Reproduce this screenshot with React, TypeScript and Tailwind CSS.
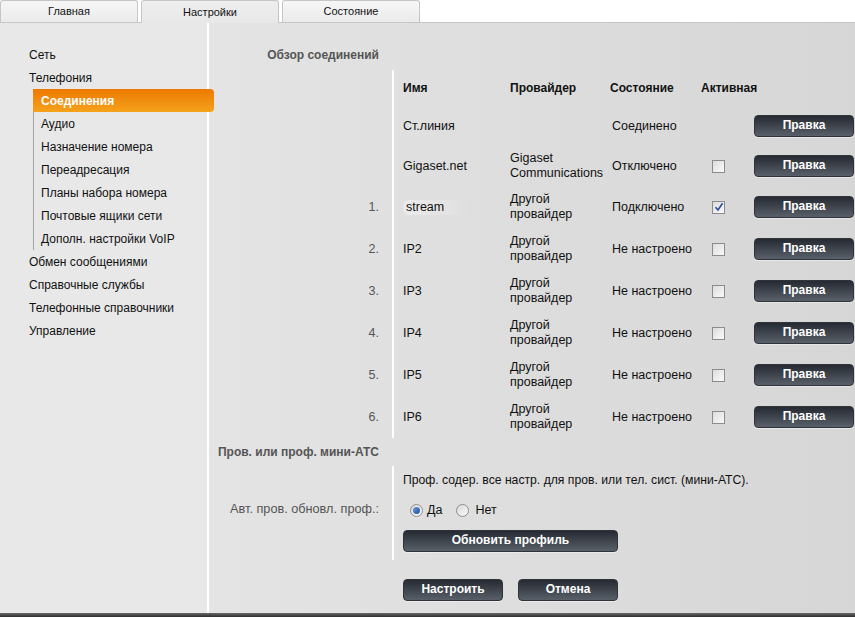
import React from "react";

const sidebarTop = ["Сеть", "Телефония"];
const subItems = [
  "Соединения",
  "Аудио",
  "Назначение номера",
  "Переадресация",
  "Планы набора номера",
  "Почтовые ящики сети",
  "Дополн. настройки VoIP",
];
const sidebarBottom = [
  "Обмен сообщениями",
  "Справочные службы",
  "Телефонные справочники",
  "Управление",
];

type Conn = {
  num: string;
  name: string;
  provider: string[];
  state: string;
  check: "none" | "off" | "on";
  h: string;
  stream?: boolean;
};

const rows: Conn[] = [
  { num: "", name: "Ст.линия", provider: [], state: "Соединено", check: "none", h: "h-[40px]" },
  { num: "", name: "Gigaset.net", provider: ["Gigaset", "Communications"], state: "Отключено", check: "off", h: "h-[40px]" },
  { num: "1.", name: "stream", provider: ["Другой", "провайдер"], state: "Подключено", check: "on", h: "h-[42px]", stream: true },
  { num: "2.", name: "IP2", provider: ["Другой", "провайдер"], state: "Не настроено", check: "off", h: "h-[42px]" },
  { num: "3.", name: "IP3", provider: ["Другой", "провайдер"], state: "Не настроено", check: "off", h: "h-[42px]" },
  { num: "4.", name: "IP4", provider: ["Другой", "провайдер"], state: "Не настроено", check: "off", h: "h-[42px]" },
  { num: "5.", name: "IP5", provider: ["Другой", "провайдер"], state: "Не настроено", check: "off", h: "h-[42px]" },
  { num: "6.", name: "IP6", provider: ["Другой", "провайдер"], state: "Не настроено", check: "off", h: "h-[42px]" },
];

function Btn({ label, w }: { label: string; w: string }) {
  return (
    <div
      className={`${w} h-[22px] rounded-[4px] bg-gradient-to-b from-[#262b33] to-[#5a6069] border border-[#30343a] flex items-start justify-center pt-[2px] text-white font-bold text-[12px] leading-[15px] shadow-[0_1px_0_rgba(255,255,255,0.4)]`}
    >
      {label}
    </div>
  );
}

function Checkbox({ checked }: { checked: boolean }) {
  return (
    <div className="w-[13px] h-[13px] border border-[#8c8c8c] bg-gradient-to-br from-[#dcdcdc] to-[#fbfbfb] flex items-center justify-center">
      {checked && (
        <svg width="10" height="10" viewBox="0 0 10 10">
          <path d="M1.5 5.2 L4 8 L8.6 1.2" fill="none" stroke="#2a4a9a" strokeWidth="1.6" />
        </svg>
      )}
    </div>
  );
}

function Radio({ checked }: { checked: boolean }) {
  return (
    <div className="w-[13px] h-[13px] rounded-full border border-[#8e8e8e] bg-gradient-to-br from-[#d8d8d8] to-[#fafafa] flex items-center justify-center">
      {checked && <div className="w-[7px] h-[7px] rounded-full bg-gradient-to-br from-[#6a9be0] to-[#1d4f9e]" />}
    </div>
  );
}

export default function App() {
  return (
    <div
      className="w-[855px] h-[617px] bg-white overflow-hidden text-[#111]"
      style={{ fontFamily: '"Liberation Sans", Arial, sans-serif' }}
    >
      {/* Tabs */}
      <div className="h-[23px] flex items-end gap-[3px] border-b border-[#c6c6c6]">
        <div className="w-[138px] h-[22px] rounded-t-[3px] border border-b-0 border-[#c6c6c6] bg-gradient-to-b from-[#f6f6f6] to-[#ebebeb] flex items-center justify-center text-[11px]">
          Главная
        </div>
        <div className="w-[138px] h-[23px] -mb-px rounded-t-[3px] border border-b-0 border-[#c6c6c6] bg-gradient-to-b from-[#eeeeee] to-[#e8e8e8] flex items-center justify-center text-[11px] relative z-10">
          Настройки
        </div>
        <div className="w-[138px] h-[22px] rounded-t-[3px] border border-b-0 border-[#c6c6c6] bg-gradient-to-b from-[#f6f6f6] to-[#ebebeb] flex items-center justify-center text-[11px]">
          Состояние
        </div>
      </div>

      {/* Body */}
      <div className="flex h-[590px]">
        {/* Sidebar */}
        <div className="w-[209px] shrink-0 bg-[#e8e8e8] border-r-2 border-white pt-[20px] text-[12px]">
          {sidebarTop.map((t) => (
            <div key={t} className="h-[23px] flex items-center pl-[29px]">
              {t}
            </div>
          ))}
          <div className="ml-[33px] border-l border-[#a2a2a2]">
            {subItems.map((t, i) =>
              i === 0 ? (
                <div
                  key={t}
                  className="relative z-10 -ml-px w-[181px] h-[23px] flex items-center pl-[8px] rounded-r-[4px] bg-gradient-to-b from-[#ec7800] to-[#f5a21a] text-white font-bold"
                >
                  {t}
                </div>
              ) : (
                <div key={t} className="h-[23px] flex items-center pl-[7px]">
                  {t}
                </div>
              )
            )}
          </div>
          {sidebarBottom.map((t) => (
            <div key={t} className="h-[23px] flex items-center pl-[29px]">
              {t}
            </div>
          ))}
        </div>

        {/* Main */}
        <div className="flex-1 bg-gradient-to-r from-[#e4e4e4] to-[#d6d6d6] pt-[21px] text-[12.5px]">
          {/* Title 1 */}
          <div className="flex h-[22px] items-center">
            <div className="w-[183px] text-right pr-[13px] font-bold text-[12px] text-[#555]">Обзор соединений</div>
          </div>
          <div className="h-[4px]" />

          {/* Header */}
          <div className="flex h-[36px]">
            <div className="w-[185px] shrink-0 border-r-2 border-white" />
            <div className="flex items-center pl-[9px] font-bold text-[12px]">
              <div className="w-[107px]">Имя</div>
              <div className="w-[100px]">Провайдер</div>
              <div className="w-[91px]">Состояние</div>
              <div className="w-[53px]">Активная</div>
            </div>
          </div>

          {rows.map((r) => (
            <div key={r.name} className={`flex ${r.h}`}>
              <div className="w-[185px] shrink-0 border-r-2 border-white flex items-center justify-end pr-[13px] text-[#555]">
                {r.num}
              </div>
              <div className="flex items-center pl-[9px] leading-[15px]">
                <div className="w-[107px]">
                  {r.stream ? (
                    <span className="inline-block pl-[3px] pr-[26px] rounded-[6px] bg-gradient-to-r from-[#ebebeb] via-[#e5e5e5] to-transparent">
                      {r.name}
                    </span>
                  ) : (
                    r.name
                  )}
                </div>
                <div className="w-[100px]">
                  {r.provider.map((p) => (
                    <div key={p}>{p}</div>
                  ))}
                </div>
                <div className="w-[92px] pl-[2px]">{r.state}</div>
                <div className="w-[52px] pl-[10px]">
                  {r.check !== "none" && <Checkbox checked={r.check === "on"} />}
                </div>
                <Btn label="Правка" w="w-[100px]" />
              </div>
            </div>
          ))}

          {/* Title 2 */}
          <div className="flex h-[28px] items-center">
            <div className="w-[183px] text-right pr-[13px] font-bold text-[12px] text-[#555]">
              Пров. или проф. мини-АТС
            </div>
          </div>

          <div className="flex h-[28px]">
            <div className="w-[185px] shrink-0 border-r-2 border-white" />
            <div className="flex items-center pl-[9px] text-[12.2px]">
              Проф. содер. все настр. для пров. или тел. сист. (мини-АТС).
            </div>
          </div>
          <div className="flex h-[32px]">
            <div className="w-[185px] shrink-0 border-r-2 border-white flex items-center justify-end pr-[13px] text-[#555] text-[12.7px]">
              Авт. пров. обновл. проф.:
            </div>
            <div className="flex items-center pl-[16px]">
              <Radio checked />
              <span className="ml-[4px]">Да</span>
              <div className="ml-[14px]">
                <Radio checked={false} />
              </div>
              <span className="ml-[6px]">Нет</span>
            </div>
          </div>
          <div className="flex h-[34px]">
            <div className="w-[185px] shrink-0 border-r-2 border-white" />
            <div className="pl-[9px] pt-[4px]">
              <Btn label="Обновить профиль" w="w-[215px]" />
            </div>
          </div>

          <div className="flex mt-[19px]">
            <div className="w-[185px] shrink-0" />
            <div className="flex pl-[9px] gap-[15px]">
              <Btn label="Настроить" w="w-[100px]" />
              <Btn label="Отмена" w="w-[100px]" />
            </div>
          </div>
        </div>
      </div>
      <div className="h-[4px] bg-gradient-to-b from-[#6a6a6a] to-[#2e2e2e]" />
    </div>
  );
}
